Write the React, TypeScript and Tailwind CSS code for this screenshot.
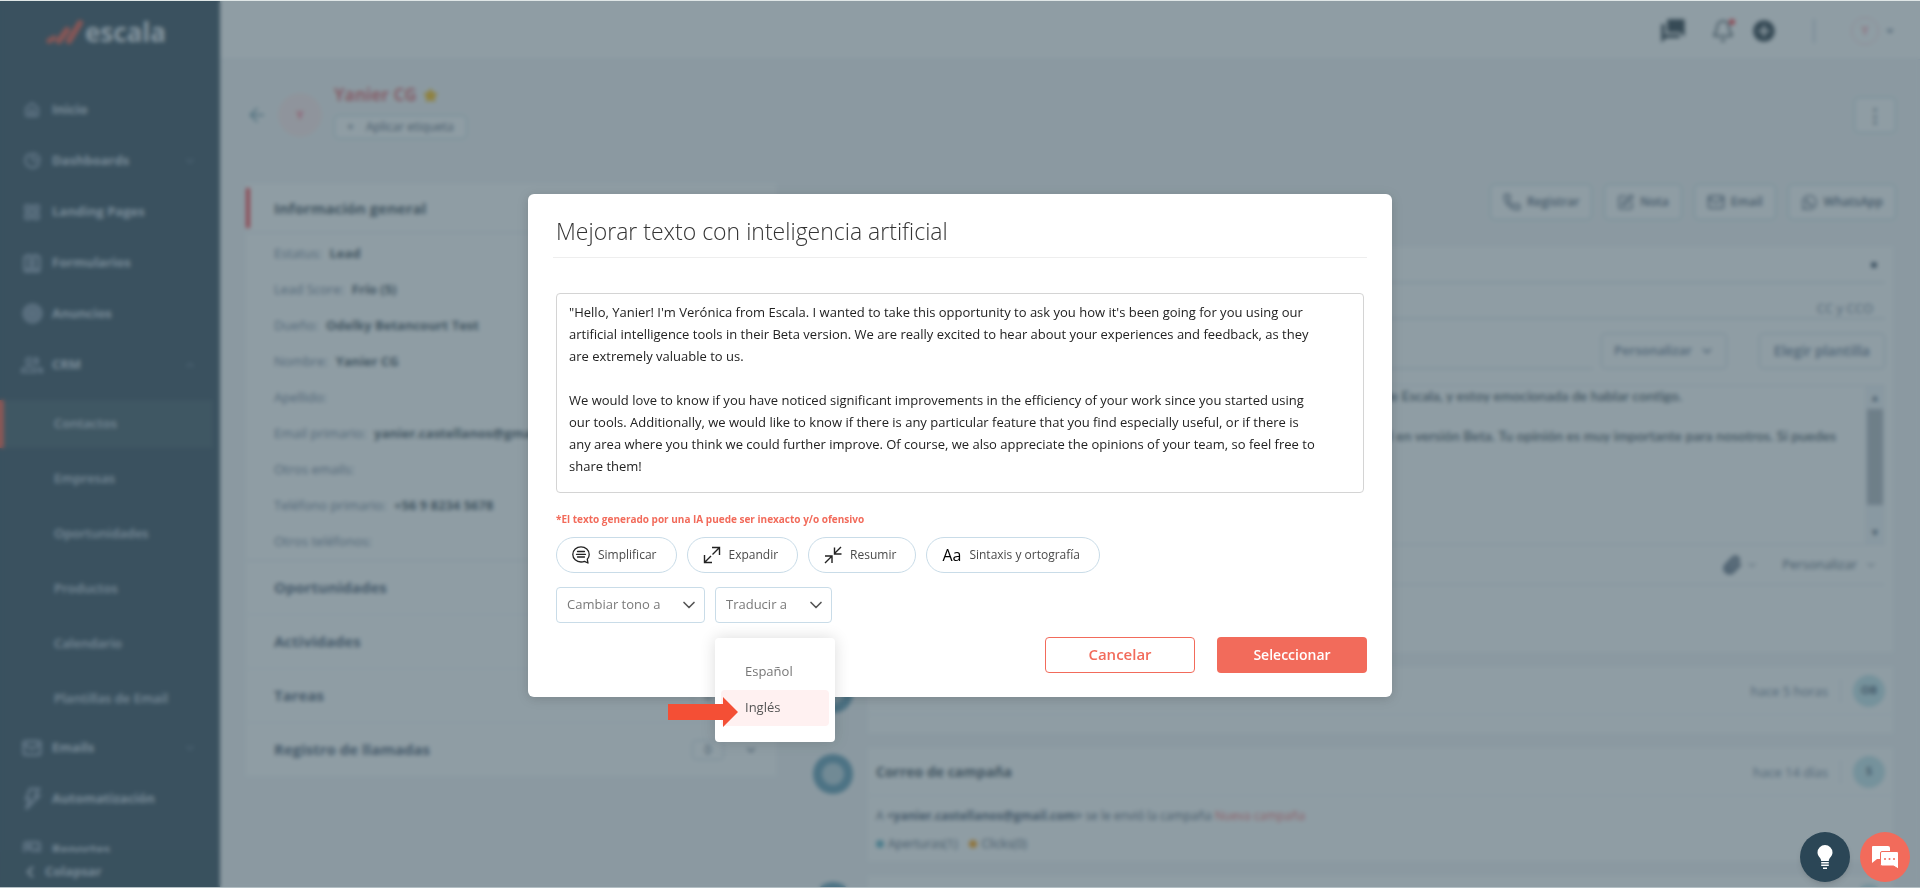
import type { ReactNode } from 'react'
import {
  ArrowLeft,
  Bell,
  ChevronDown,
  ChevronLeft,
  ChevronUp,
  Contact,
  Home,
  Image,
  LayoutGrid,
  Mail,
  Paperclip,
  Phone,
  PieChart,
  SquarePen,
  Star,
  Target,
} from 'lucide-react'
import { FaWhatsapp } from 'react-icons/fa'
import { MdAddCircle, MdArrowDropDown, MdForum, MdOutlinePeopleAlt } from 'react-icons/md'

const IMPROVED_TEXT = `"Hello, Yanier! I'm Verónica from Escala. I wanted to take this opportunity to ask you how it's been going for you using our
artificial intelligence tools in their Beta version. We are really excited to hear about your experiences and feedback, as they
are extremely valuable to us.

We would love to know if you have noticed significant improvements in the efficiency of your work since you started using
our tools. Additionally, we would like to know if there is any particular feature that you find especially useful, or if there is
any area where you think we could further improve. Of course, we also appreciate the opinions of your team, so feel free to
share them!`

const crmLinks = ['Contactos', 'Empresas', 'Oportunidades', 'Productos', 'Calendario', 'Plantillas de Email']

const contactFields = [
  { label: 'Estatus:', value: 'Lead' },
  { label: 'Lead Score:', value: 'Frío (5)' },
  { label: 'Dueño:', value: 'Odelky Betancourt Test' },
  { label: 'Nombre:', value: 'Yanier CG' },
  { label: 'Apellido:', value: '' },
  { label: 'Email primario:', value: 'yanier.castellanos@gmail.com' },
  { label: 'Otros emails:', value: '' },
  { label: 'Teléfono primario:', value: '+56 9 8234 5678' },
  { label: 'Otros teléfonos:', value: '' },
]

function NavItem({
  icon,
  label,
  chevron,
}: {
  icon: ReactNode
  label: string
  chevron?: ReactNode
}) {
  return (
    <a href="#" className="flex h-[51px] shrink-0 items-center pr-6 text-[13px] font-bold text-slate-300">
      <span className="mr-1 ml-4 flex w-8 justify-center text-slate-400">{icon}</span>
      <span className="flex-1">{label}</span>
      <span className="text-slate-400">{chevron}</span>
    </a>
  )
}

function BoltIcon() {
  return (
    <svg width="20" height="24" viewBox="0 0 20 24" fill="none" stroke="currentColor" strokeWidth="2.500">
      <path d="M8 2h9l-4 7h4L4 22l4-10H4z" />
    </svg>
  )
}

function Logo() {
  return (
    <div className="flex h-16 shrink-0 items-center justify-center gap-px pr-2">
      <svg width="38" height="25" viewBox="0 0 38 25" fill="none" stroke="#f0503c" strokeLinecap="round">
        <path d="M3 21l5-3" strokeWidth="5" />
        <path d="M13 21l8-11" strokeWidth="6" />
        <path d="M23 21L34 3" strokeWidth="6" />
      </svg>
      <span className="text-[26px] leading-6 font-bold text-slate-200">escala</span>
    </div>
  )
}

function Sidebar() {
  return (
    <aside className="flex w-[220px] shrink-0 flex-col bg-[#2b4253]">
      <Logo />
      <nav className="flex flex-1 flex-col overflow-hidden pt-5">
        <NavItem icon={<Home size={16} strokeWidth={3} />} label="Inicio" />
        <NavItem icon={<PieChart size={17} strokeWidth={3} />} label="Dashboards" chevron={<ChevronDown size={12} />} />
        <NavItem icon={<LayoutGrid size={18} strokeWidth={3} />} label="Landing Pages" />
        <NavItem icon={<Contact size={20} strokeWidth={3} />} label="Formularios" />
        <NavItem icon={<Target size={21} strokeWidth={3} />} label="Anuncios" />
        <NavItem icon={<MdOutlinePeopleAlt size={24} />} label="CRM" chevron={<ChevronUp size={12} />} />
        <ul className="-mb-1 pt-1.5">
          {crmLinks.map((link, index) => (
            <li key={link} className="flex h-[55px] items-center">
              <a
                href="#"
                className={`flex h-12 w-[213px] items-center text-[13px] font-semibold text-slate-300 ${
                  index === 0 ? 'border-l-4 border-[#f0503c] bg-[#38505c] pl-[50px]' : 'pl-[54px]'
                }`}
              >
                {link}
              </a>
            </li>
          ))}
        </ul>
        <NavItem icon={<Mail size={20} strokeWidth={3} />} label="Emails" chevron={<ChevronDown size={12} />} />
        <NavItem icon={<BoltIcon />} label="Automatización" />
        <NavItem icon={<Image size={20} strokeWidth={3} />} label="Reportes" />
      </nav>
      <button
        type="button"
        className="flex h-9 shrink-0 items-center gap-1.5 bg-[#294151] px-[21px] pt-1 text-[13px] font-bold text-slate-300"
      >
        <ChevronLeft size={18} strokeWidth={3} />
        Colapsar
      </button>
    </aside>
  )
}

function TopBar() {
  return (
    <header className="flex h-[60px] shrink-0 items-center justify-end border-b border-slate-200 bg-white pt-0.5 pr-[21px] text-[#22313c]">
      <MdForum size={28} className="mr-6 -scale-x-100" />
      <span className="relative mr-4">
        <Bell size={24} strokeWidth={1.5} />
        <span className="absolute top-0 right-0 h-1.5 w-1.5 rounded-full bg-red-500" />
      </span>
      <MdAddCircle size={26} />
      <span className="mx-9 h-6 w-0.5 bg-slate-300" />
      <span className="flex h-7 w-7 items-center justify-center rounded-full border border-rose-200 bg-white text-xs font-bold text-rose-300">
        Y
      </span>
      <MdArrowDropDown size={18} className="ml-0.5 text-slate-500" />
    </header>
  )
}

function ContactHeader() {
  return (
    <div className="-mr-[3px] flex h-[110px] items-center">
      <a href="#" aria-label="Volver" className="text-[#4c7f92]">
        <ArrowLeft size={22} strokeWidth={1.5} />
      </a>
      <span className="ml-2.5 flex h-11 w-11 items-center justify-center rounded-full bg-[#ffe9ea] text-[11px] font-bold text-rose-400">
        Y
      </span>
      <div className="ml-3 flex flex-col items-start gap-2 pb-2">
        <h1 className="flex items-center gap-1.5 text-[17px] leading-6 font-bold text-[#e8656c]">
          Yanier CG
          <Star size={15} className="fill-amber-400 text-amber-400" />
        </h1>
        <button
          type="button"
          className="flex h-6 items-center gap-3 rounded border border-[#b5d6df] bg-white px-3 text-xs text-slate-600"
        >
          <span>+</span>
          Aplicar etiqueta
        </button>
      </div>
      <button
        type="button"
        aria-label="Más opciones"
        className="ml-auto h-9 w-[42px] rounded border border-[#b5d6df] bg-white text-lg font-bold text-slate-600"
      >
        ⋮
      </button>
    </div>
  )
}

function ContactInfo() {
  return (
    <section className="w-[530px] shrink-0 self-start bg-white">
      <div className="flex h-[49px] items-center border-b border-slate-200">
        <span className="h-10 w-1 bg-red-500" />
        <h2 className="ml-6 text-[15px] font-bold text-[#3c4b57]">Información general</h2>
      </div>
      <dl className="border-b border-slate-200 px-7 pt-[3px]">
        {contactFields.map((field) => (
          <div key={field.label} className="flex h-9 items-center gap-2 text-[13px] whitespace-nowrap">
            <dt className="text-slate-500">{field.label}</dt>
            <dd className="font-bold text-[#3c4b57]">{field.value}</dd>
          </div>
        ))}
      </dl>
      {['Oportunidades', 'Actividades', 'Tareas', 'Registro de llamadas'].map((title) => (
        <div key={title} className="flex h-[54px] items-center border-b border-slate-100 px-7 text-slate-600">
          <h2 className="flex-1 text-[15px] font-bold">{title}</h2>
          <span className="flex h-5 w-8 items-center justify-center rounded border border-slate-300 text-xs">0</span>
          <ChevronDown size={14} className="mr-[-10px] ml-5" />
        </div>
      ))}
    </section>
  )
}

function ActionButton({ icon, label }: { icon: ReactNode; label: string }) {
  return (
    <button
      type="button"
      className="flex h-9 items-center gap-1.5 rounded border border-[#b5d6df] bg-white px-3 text-xs font-semibold text-slate-600"
    >
      {icon}
      {label}
    </button>
  )
}

function EmailEditor() {
  return (
    <div className="ml-[67px] flex h-[405px] flex-col bg-white pr-2">
      <div className="flex h-9 items-center justify-end border-b border-slate-300 pr-2">
        <span className="h-1.5 w-1.5 rounded-full bg-slate-700" />
      </div>
      <div className="flex h-9 items-end justify-end border-b border-slate-300 pr-3 text-[13px] text-slate-500">CC y CCO</div>
      <div className="flex h-[50px] items-end">
        <span className="h-px flex-1 bg-slate-300" />
        <button
          type="button"
          className="mr-8 ml-2 flex h-9 items-center gap-2 rounded border border-slate-300 px-3 text-[13px] font-semibold text-slate-500"
        >
          Personalizar
          <ChevronDown size={14} strokeWidth={3} />
        </button>
        <button type="button" className="h-9 rounded border border-slate-300 px-3.5 text-sm font-semibold text-slate-500">
          Elegir plantilla
        </button>
      </div>
      <div className="mt-4 flex h-[160px] border-y border-slate-200">
        <div className="flex-1 text-right font-[Lato] text-sm font-semibold text-[#3c4b57]">
          <p className="mr-[183px] h-10 leading-5">de Escala, y estoy emocionada de hablar contigo.</p>
          <p className="mr-[29px] leading-5">ial en versión Beta. Tu opinión es muy importante para nosotros. Si puedes</p>
        </div>
        <div className="flex w-5 flex-col items-center justify-between bg-slate-100 py-1 text-[10px] text-slate-600">
          <span>▲</span>
          <span className="mb-4 h-24 w-4 bg-[#adb3ba]" />
          <span>▼</span>
        </div>
      </div>
      <div className="flex h-10 items-center justify-end border-b border-slate-200 pr-2 text-[13px] text-slate-600">
        <Paperclip size={20} strokeWidth={3} className="mr-1" />
        <ChevronDown size={12} className="mr-6" />
        Personalizar
        <ChevronDown size={12} className="ml-2" />
      </div>
    </div>
  )
}

function TimelineCard({
  time,
  initials,
  title,
  children,
}: {
  time: string
  initials: string
  title?: string
  children?: ReactNode
}) {
  return (
    <div className="mt-[15px] flex">
      <span className="mt-1.5 mr-[15px] ml-[13px] flex h-10 w-10 items-center justify-center rounded-full bg-[#5a96b0]">
        <span className="h-[22px] w-[22px] rounded-full bg-[#b4cfda]" />
      </span>
      <article className="flex-1 bg-white">
        <div className="flex h-12 items-center border-b border-slate-100 px-2">
          <h3 className="flex-1 text-sm font-bold text-[#3c4b57]">{title}</h3>
          <span className="border-r border-slate-200 pr-3 text-[13px] leading-6 text-slate-500">{time}</span>
          <span className="ml-3 flex h-8 w-8 items-center justify-center rounded-full bg-[#bfe3ea] text-[11px] font-bold text-slate-600">
            {initials}
          </span>
        </div>
        {children}
      </article>
    </div>
  )
}

function Activity() {
  return (
    <section className="ml-6 min-w-0 flex-1">
      <div className="-mr-[3px] flex h-[63px] justify-end gap-3">
        <ActionButton icon={<Phone size={18} />} label="Registrar" />
        <ActionButton icon={<SquarePen size={17} />} label="Nota" />
        <ActionButton icon={<Mail size={18} />} label="Email" />
        <ActionButton icon={<FaWhatsapp size={17} />} label="WhatsApp" />
      </div>
      <EmailEditor />
      <TimelineCard time="hace 5 horas" initials="OB">
        <div className="h-[18px]" />
      </TimelineCard>
      <TimelineCard time="hace 14 días" initials="S" title="Correo de campaña">
        <div className="h-[65px] px-2 pt-2 text-xs text-slate-600">
          <p className="leading-6">
            A <b>&lt;yanier.castellanos@gmail.com&gt;</b> se le envió la campaña{' '}
            <a href="#" className="text-red-400">Nueva campaña</a>
          </p>
          <p className="flex items-center leading-8">
            <span className="mr-1 h-2 w-2 rounded-full bg-[#5cb0c4]" />
            Aperturas(1)
            <span className="mr-1 ml-3 h-2 w-2 rounded-full bg-amber-500" />
            Clicks(0)
          </p>
        </div>
      </TimelineCard>
      <TimelineCard time="" initials="" />
    </section>
  )
}

function PillButton({ icon, label }: { icon: ReactNode; label: string }) {
  return (
    <button
      type="button"
      className="flex h-9 items-center gap-2 rounded-full border border-[#c9dce8] bg-white pr-[19px] pl-[15px] text-xs text-[#4a4a4a]"
    >
      {icon}
      {label}
    </button>
  )
}

function SimplifyIcon() {
  return (
    <svg width="18" height="18" viewBox="0 0 18 18" fill="none" stroke="#222" strokeWidth="1.3" strokeLinecap="round" strokeLinejoin="round">
      <path d="M12.500 15.300C11.500 15.800 10.200 16 9 16 4.500 16 .8 12.700.8 8.400S4.500.8 9 .8s8.200 3.300 8.200 7.600c0 1.900-.7 3.600-1.900 4.900l.7 3.700z" />
      <path d="M5.500 5.500h7M4.500 8.300h9M5.500 11h7" />
    </svg>
  )
}

function ExpandIcon() {
  return (
    <svg width="18" height="18" viewBox="0 0 18 18" fill="none" stroke="#222" strokeWidth="1.4">
      <path d="M9.500 8.500L16 2M9 1.500h7.500V9M8 10L2 16M1.500 9v7.500H9" />
    </svg>
  )
}

function ShrinkIcon() {
  return (
    <svg width="18" height="18" viewBox="0 0 18 18" fill="none" stroke="#222" strokeWidth="1.4">
      <path d="M17 1l-6.500 6.500M10.500 1.500v6.500h7M1 17l6.500-6.500M1 10h7v7" />
    </svg>
  )
}

function SelectBox({ id, label }: { id: string; label: string }) {
  return (
    <div className="relative flex items-center">
      <select
        id={id}
        aria-label={label}
        className="h-9 appearance-none rounded border border-[#c9dce8] bg-white pr-[43px] pl-2.5 text-[13px] text-[#7a7a7a]"
      >
        <option>{label}</option>
      </select>
      <ChevronDown size={20} className="pointer-events-none absolute right-1.5 text-[#555]" />
    </div>
  )
}

function TranslateMenu() {
  return (
    <div className="absolute top-full left-0 mt-[15px] w-[120px] rounded bg-white px-1.5 py-4 text-[13px] shadow-[0_0_16px_rgba(0,0,0,0.14)]">
      <button type="button" className="block h-9 w-full rounded pl-6 text-left text-[#777]">
        Español
      </button>
      <button type="button" className="block h-9 w-full rounded bg-[#fff1f1] pl-6 text-left text-[#555]">
        Inglés
      </button>
      <svg width="70" height="30" viewBox="0 0 70 30" className="absolute top-[59px] right-[97px]">
        <path d="M0 7h55V0l15 15-15 15v-7H0z" fill="#f44f35" />
      </svg>
    </div>
  )
}

function ImproveTextDialog() {
  return (
    <div
      role="dialog"
      aria-labelledby="dialog-title"
      className="mt-0.5 w-full max-w-[864px] rounded-md bg-white px-[25px] pb-6 shadow-[0_2px_12px_rgba(0,0,0,0.15)]"
    >
      <h2 id="dialog-title" className="border-b border-[#eeeeee] px-[3px] pt-[21px] pb-2.5 text-[23px] leading-8 font-light text-[#333]">
        Mejorar texto con inteligencia artificial
      </h2>
      <div className="px-[3px] pt-[35px]">
        <textarea
          aria-label="Texto mejorado"
          defaultValue={IMPROVED_TEXT}
          className="block h-[200px] w-full resize-none overflow-hidden rounded-sm border border-[#d4d4d4] px-3 py-[7px] text-[13px] leading-[22px] whitespace-pre text-[#222]"
        />
        <p className="pt-4 text-[10px] leading-5 font-bold text-[#f26b5b]">
          *El texto generado por una IA puede ser inexacto y/o ofensivo
        </p>
        <div className="mt-2 flex gap-2.5">
          <PillButton icon={<SimplifyIcon />} label="Simplificar" />
          <PillButton icon={<ExpandIcon />} label="Expandir" />
          <PillButton icon={<ShrinkIcon />} label="Resumir" />
          <PillButton icon={<span className="text-base text-black">Aa</span>} label="Sintaxis y ortografía" />
        </div>
        <div className="mt-3.5 flex gap-2.5">
          <SelectBox id="tone" label="Cambiar tono a" />
          <div className="relative z-10">
            <SelectBox id="language" label="Traducir a" />
            <TranslateMenu />
          </div>
        </div>
      </div>
      <div className="mt-3.5 flex justify-end gap-[22px]">
        <button type="button" className="h-9 w-[150px] rounded border border-[#f26b5b] text-[15px] font-semibold text-[#f26b5b]">
          Cancelar
        </button>
        <button type="button" className="h-9 w-[150px] rounded bg-[#f26b5b] text-sm font-semibold text-white">
          Seleccionar
        </button>
      </div>
    </div>
  )
}

function HelpButtons() {
  return (
    <div className="fixed right-2.5 bottom-1.5 flex gap-2.5">
      <button
        type="button"
        aria-label="Ayuda"
        className="flex h-[50px] w-[50px] items-center justify-center rounded-full bg-[#2b4656] shadow-md"
      >
        <svg width="16" height="25" viewBox="0 0 16 25" fill="#fff">
          <path d="M8 0a7.500 7.500 0 0 0-7.500 7.500c0 4 3.500 5 3.700 8.500h7.600c.2-3.500 3.700-4.500 3.700-8.500A7.500 7.500 0 0 0 8 0z" />
          <path d="M4.200 17h7.600v1.500H4.200zM4.200 19.500h7.600V21H4.200zM6 22.500h4V24H6z" />
        </svg>
      </button>
      <button
        type="button"
        aria-label="Chat"
        className="flex h-[50px] w-[50px] items-center justify-center rounded-full bg-[#f26b5b]"
      >
        <svg width="28" height="25" viewBox="0 0 28 25">
          <path d="M2 1h15a2 2 0 0 1 2 2v11H6l-5 4V2a1 1 0 0 1 1-1z" fill="#fff" />
          <path
            d="M11 6.500h15a1.500 1.500 0 0 1 1.500 1.500v16l-5-3H11a1.500 1.500 0 0 1-1.500-1.500V8A1.500 1.500 0 0 1 11 6.500z"
            fill="#fff"
            stroke="#f26b5b"
          />
          <g fill="#f26b5b">
            <circle cx="14" cy="14" r="1" />
            <circle cx="18.500" cy="14" r="1" />
            <circle cx="23" cy="14" r="1" />
          </g>
        </svg>
      </button>
    </div>
  )
}

export default function App() {
  return (
    <div className="relative h-screen overflow-hidden font-['Open_Sans',sans-serif]">
      <div className="flex h-full">
        <Sidebar />
        <div className="flex min-w-0 flex-1 flex-col bg-[#f5f6f8]">
          <TopBar />
          <main className="flex-1 overflow-hidden pr-[27px] pl-[26px]">
            <ContactHeader />
            <div className="flex pt-[14px]">
              <ContactInfo />
              <Activity />
            </div>
          </main>
        </div>
      </div>
      <div className="absolute inset-0 flex items-center justify-center border-y border-t-[#dfe6e6] border-b-[#b4c0c5] bg-[#445c67]/60 backdrop-blur-[2px]">
        <ImproveTextDialog />
      </div>
      <HelpButtons />
    </div>
  )
}
